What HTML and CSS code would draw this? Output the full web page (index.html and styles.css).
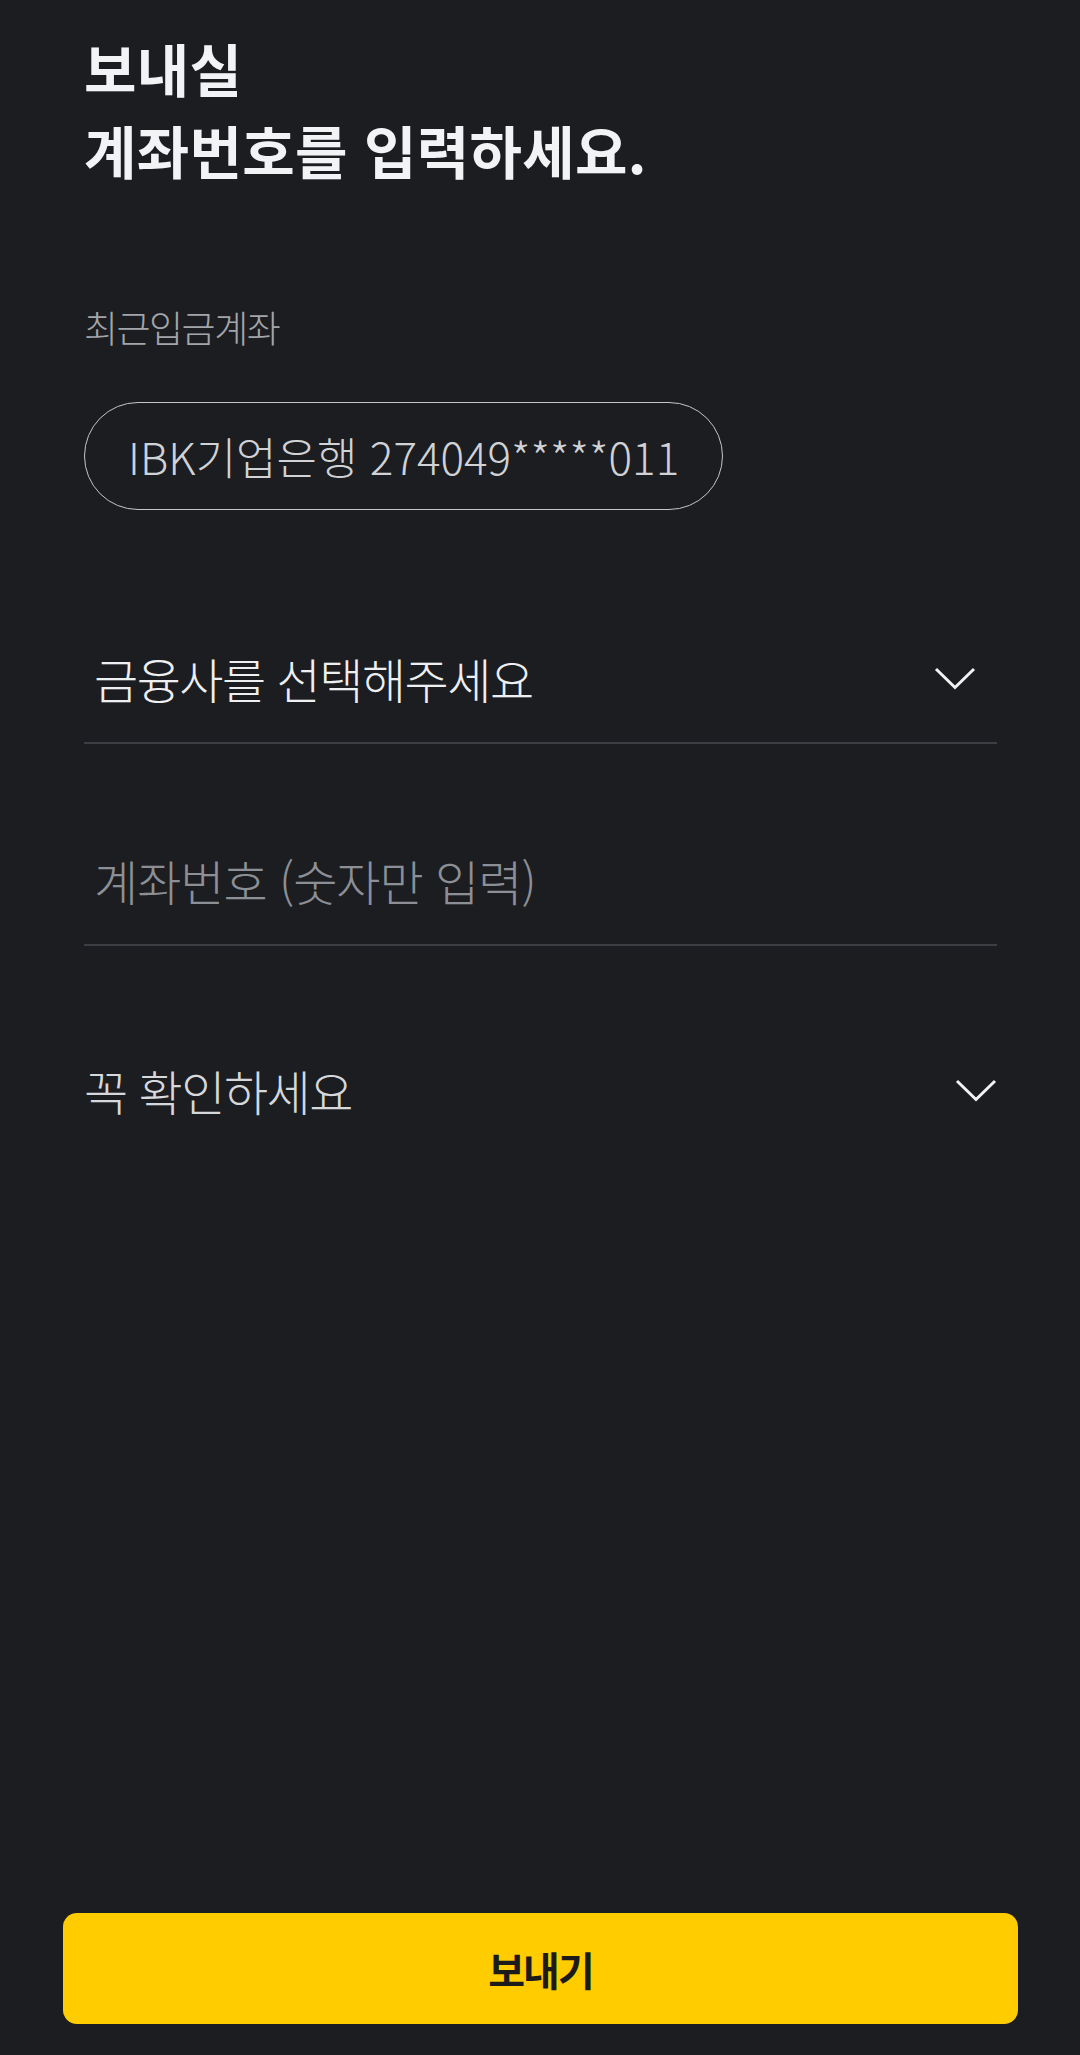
FILE: index.html
```html
<!DOCTYPE html>
<html lang="ko">
<head>
<meta charset="UTF-8">
<meta name="viewport" content="width=device-width, initial-scale=1.0">
<title>계좌번호 입력</title>
<link rel="stylesheet" href="styles.css">
</head>
<body>
<div class="page">
  <div class="content">
    <h1 class="title">보내실<br>계좌번호를 입력하세요.</h1>

    <p class="label">최근입금계좌</p>
    <button class="chip" type="button">IBK기업은행 274049*****011</button>

    <div class="field select">
      <span class="field-text">금융사를 선택해주세요</span>
      <svg class="chevron" width="42" height="23" viewBox="0 0 42 23">
        <polyline points="2,2 21,20.5 40,2" fill="none" stroke="#f2f2f2" stroke-width="3"/>
      </svg>
    </div>

    <div class="field input">
      <span class="field-text placeholder">계좌번호 (숫자만 입력)</span>
    </div>

    <div class="notice">
      <span class="notice-text">꼭 확인하세요</span>
      <svg class="chevron" width="42" height="23" viewBox="0 0 42 23">
        <polyline points="2,2 21,20.5 40,2" fill="none" stroke="#f2f2f2" stroke-width="3"/>
      </svg>
    </div>
  </div>

  <button class="btn-send" type="button">보내기</button>
</div>
</body>
</html>
```

FILE: styles.css
```css
body {
  margin: 0;
  padding: 0;
  background-color: #1c1d21;
  font-family: "Noto Sans CJK KR", "Noto Sans", sans-serif;
}

.page {
  min-height: 100vh;
  box-sizing: border-box;
  display: flex;
  flex-direction: column;
  padding-bottom: 31px;
}

.content {
  padding: 26px 83px 0 84px;
}

.title {
  margin: 0;
  font-size: 57px;
  line-height: 82px;
  font-weight: 700;
  letter-spacing: 0.3px;
  color: #f2f3f5;
}

.label {
  margin: 117px 0 0;
  font-size: 37px;
  line-height: 40px;
  font-weight: 300;
  letter-spacing: -1.5px;
  color: #a2a5aa;
}

.chip {
  margin-top: 55px;
  height: 108px;
  padding: 0 43px;
  border: 1.5px solid #c4c6ca;
  border-radius: 54px;
  background: transparent;
  font-family: inherit;
  font-size: 44px;
  font-weight: 300;
  color: #d0d2d6;
}

.field {
  display: flex;
  align-items: center;
  justify-content: space-between;
  height: 76px;
  padding: 0 21px 26px 10px;
  border-bottom: 2px solid #3c3e43;
}

.field.select {
  margin-top: 130px;
}

.field.input {
  margin-top: 98px;
}

.field-text {
  font-size: 48px;
  font-weight: 300;
  letter-spacing: -1.5px;
  color: #eeeff1;
}

.field-text.placeholder {
  letter-spacing: -1px;
  color: #8c9096;
}

.notice {
  display: flex;
  align-items: center;
  justify-content: space-between;
  height: 76px;
  margin-top: 106px;
}

.notice-text {
  font-size: 48px;
  font-weight: 300;
  letter-spacing: -1.5px;
  color: #d6d8dc;
}

.btn-send {
  margin: auto 62px 0 63px;
  height: 111px;
  border: none;
  border-radius: 14px;
  background-color: #ffcc00;
  font-family: inherit;
  font-size: 40px;
  font-weight: 700;
  letter-spacing: -2px;
  color: #1b1b1b;
  cursor: pointer;
}
```
